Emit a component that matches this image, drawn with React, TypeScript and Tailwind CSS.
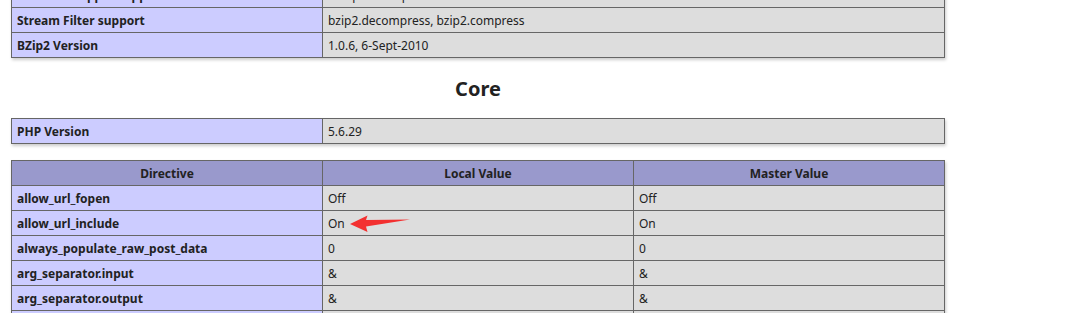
import React from "react";

type Row = [string, string];
type Row3 = [string, string, string];

const bzipRows: Row[] = [
  ["Stream Wrapper support", "compress.bzip2://"],
  ["Stream Filter support", "bzip2.decompress, bzip2.compress"],
  ["BZip2 Version", "1.0.6, 6-Sept-2010"],
];

const coreDirectives: Row3[] = [
  ["allow_url_fopen", "Off", "Off"],
  ["allow_url_include", "On", "On"],
  ["always_populate_raw_post_data", "0", "0"],
  ["arg_separator.input", "&", "&"],
  ["arg_separator.output", "&", "&"],
  ["asp_tags", "Off", "Off"],
];

const cell = "border border-[#666] px-[5px] pt-[5px] pb-[3px] text-[12px] leading-[16px] align-baseline text-left";
const eCell = `${cell} bg-[#ccf] font-bold`;
const vCell = `${cell} bg-[#ddd]`;
const hCell = `${cell} bg-[#99c] font-bold !text-center`;

function KeyValueTable({ rows, className = "" }: { rows: Row[]; className?: string }) {
  return (
    <table className={`w-[934px] table-fixed border-collapse shadow-[1px_2px_3px_#ccc] ${className}`}>
      <colgroup>
        <col className="w-[311px]" />
        <col />
      </colgroup>
      <tbody>
        {rows.map(([k, v]) => (
          <tr key={k}>
            <td className={eCell}>{k}</td>
            <td className={vCell}>{v}</td>
          </tr>
        ))}
      </tbody>
    </table>
  );
}

export default function App() {
  return (
    <div
      className="relative h-[313px] w-[1079px] overflow-hidden bg-white text-[#222]"
      style={{ fontFamily: '"Noto Sans", "Open Sans", sans-serif' }}
    >
      <div className="ml-[11px] -mt-[18px] w-[934px]">
        <KeyValueTable rows={bzipRows} />

        <h2 className="mt-[17px] text-center text-[20px] font-bold leading-[28px]">Core</h2>

        <KeyValueTable rows={[["PHP Version", "5.6.29"]]} className="mt-[15px]" />

        <table className="mt-4 w-[934px] table-fixed border-collapse shadow-[1px_2px_3px_#ccc]">
          <colgroup>
            <col className="w-[311px]" />
            <col className="w-[311px]" />
            <col />
          </colgroup>
          <thead>
            <tr>
              <th className={hCell}>Directive</th>
              <th className={hCell}>Local Value</th>
              <th className={hCell}>Master Value</th>
            </tr>
          </thead>
          <tbody>
            {coreDirectives.map(([k, local, master]) => (
              <tr key={k}>
                <td className={eCell}>{k}</td>
                <td className={vCell}>{local}</td>
                <td className={vCell}>{master}</td>
              </tr>
            ))}
          </tbody>
        </table>
      </div>

      {/* red annotation arrow pointing at allow_url_include */}
      <svg
        className="pointer-events-none absolute left-[345px] top-[210px]"
        width="70"
        height="26"
        viewBox="0 0 70 26"
      >
        <polygon
          points="5,14 22.5,5.5 21,10 65,9.5 21,16.5 22.5,22"
          fill="#f33030"
        />
      </svg>
    </div>
  );
}
